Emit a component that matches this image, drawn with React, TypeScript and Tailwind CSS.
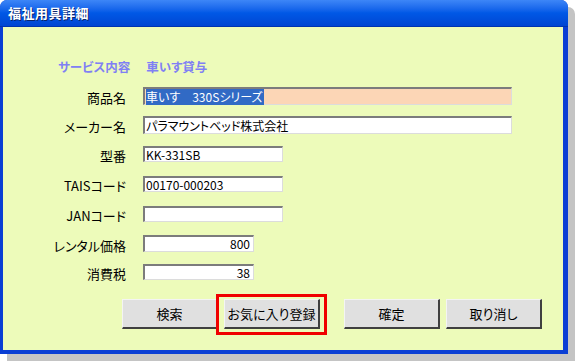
import React from 'react'

const jp = "font-['Noto_Sans_CJK_JP','Noto_Sans',sans-serif] [font-feature-settings:'palt']"

interface FieldProps {
  label: string
  value: string
  width: string
  height?: string
  mt: string
  align?: 'left' | 'right'
  bg?: string
  selected?: boolean
}

function Field({ label, value, width, height = 'h-[16px]', mt, align = 'left', bg = 'bg-white', selected }: FieldProps) {
  return (
    <div className={`flex items-center ${mt}`}>
      <div className="w-[123px] pt-[3px] text-right text-[13px] leading-none text-black">{label}</div>
      <div
        className={`ml-[17px] ${width} ${height} ${bg} flex items-center border-t-2 border-l-2 border-t-[#7c7c7c] border-l-[#7c7c7c] border-b border-r border-b-[#dcdcdc] border-r-[#dcdcdc] px-[1px] text-[12px] leading-none text-black ${
          align === 'right' ? 'justify-end pr-[3px]' : ''
        }`}
      >
        {selected ? (
          <span className="bg-[#316ac5] text-white py-[2px] pr-[1px]">{value}</span>
        ) : (
          <span>{value}</span>
        )}
      </div>
    </div>
  )
}

function Button({ label }: { label: string }) {
  return (
    <button className="w-[96px] h-[30px] bg-[#e0e0e0] border-t border-l border-t-[#f4f4f4] border-l-[#f4f4f4] border-b-2 border-r-2 border-b-[#404040] border-r-[#404040] text-[13px] leading-none text-black">
      {label}
    </button>
  )
}

export default function App() {
  return (
    <div className={`w-[579px] h-[364px] bg-white ${jp}`}>
      <div className="w-[568px] h-[354px] flex flex-col rounded-t-[7px] bg-[#0a3ed4] shadow-[7px_7px_0_#c4c4c4]">
        {/* Title bar */}
        <div className="h-[27px] shrink-0 flex items-center px-[8px] rounded-t-[7px] bg-gradient-to-b from-[#3d86f7] via-[#0058e6] to-[#0045d2] border-b border-b-[#0033b0]">
          <span className="text-[13px] font-bold text-white tracking-[0.5px] [text-shadow:1px_1px_0_#0a246a]">福祉用具詳細</span>
        </div>

        {/* Client area */}
        <div className="flex-1 ml-[3px] mr-[5px] mb-[4px] bg-[#edfbba] flex flex-col">
          <div className="mt-[33px] flex text-[12.5px] font-bold leading-[14px] text-[#8080f4]">
            <span className="ml-[55px]">サービス内容</span>
            <span className="ml-[16px]">車いす貸与</span>
          </div>

          <Field label="商品名" value="車いす　330Sシリーズ" width="w-[369px]" height="h-[18px]" mt="mt-[13px]" bg="bg-[#fcd6b6]" selected />
          <Field label="メーカー名" value="パラマウントベッド株式会社" width="w-[369px]" height="h-[18px]" mt="mt-[11px]" />
          <Field label="型番" value="KK-331SB" width="w-[140px]" mt="mt-[12px]" />
          <Field label="TAISコード" value="00170-000203" width="w-[140px]" mt="mt-[14px]" />
          <Field label="JANコード" value="" width="w-[140px]" mt="mt-[14px]" />
          <Field label="レンタル価格" value="800" width="w-[111px]" height="h-[17px]" mt="mt-[13px]" align="right" />
          <Field label="消費税" value="38" width="w-[111px]" mt="mt-[12px]" align="right" />

          <div className="mt-[19px] flex ml-[119px]">
            <Button label="検索" />
            <div className="relative ml-[6px]">
              <Button label="お気に入り登録" />
              <span className="absolute -left-[8px] -right-[7px] -top-[5px] -bottom-[6px] border-[3px] border-[#f00000] pointer-events-none" />
            </div>
            <div className="ml-[24px]">
              <Button label="確定" />
            </div>
            <div className="ml-[6px]">
              <Button label="取り消し" />
            </div>
          </div>
        </div>
      </div>
    </div>
  )
}
